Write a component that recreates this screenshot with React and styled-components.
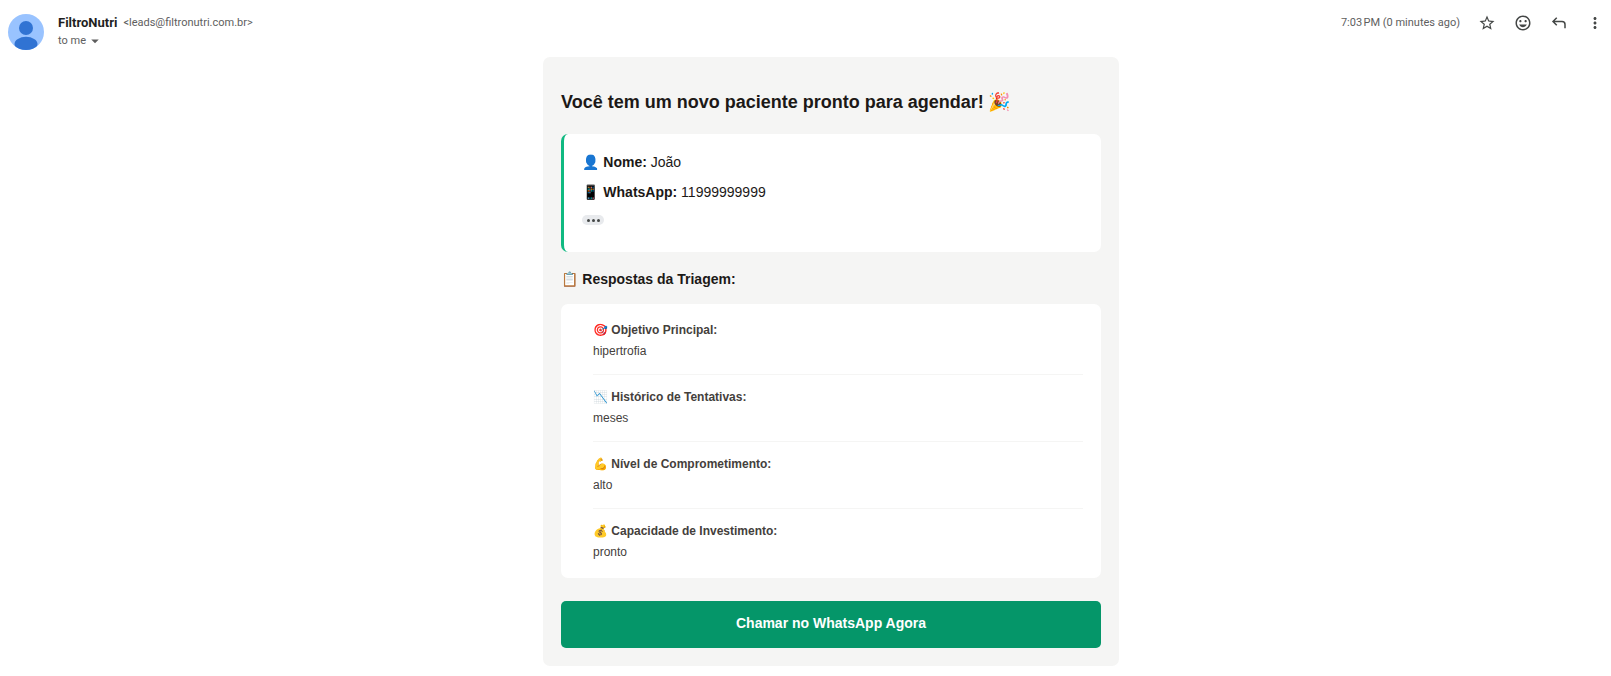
import React from 'react';
import styled, { createGlobalStyle } from 'styled-components';
import { MdStarBorder, MdMood, MdMoreVert, MdArrowDropDown } from 'react-icons/md';

const answers = [
  { icon: '🎯', question: 'Objetivo Principal:', answer: 'hipertrofia' },
  { icon: '📉', question: 'Histórico de Tentativas:', answer: 'meses' },
  { icon: '💪', question: 'Nível de Comprometimento:', answer: 'alto' },
  { icon: '💰', question: 'Capacidade de Investimento:', answer: 'pronto' },
];

const ReplyIcon = () => (
  <svg width="18" height="18" viewBox="0 0 24 24" fill="none" stroke="currentColor" strokeWidth="2">
    <path d="M9 5 4 10l5 5M4 10h12a4 4 0 0 1 4 4v5" />
  </svg>
);

const Avatar = () => (
  <AvatarSvg viewBox="0 0 36 36" aria-hidden="true">
    <clipPath id="avatar-clip">
      <circle cx="18" cy="18" r="18" />
    </clipPath>
    <g clipPath="url(#avatar-clip)">
      <rect width="36" height="36" fill="#99c3ff" />
      <circle cx="18" cy="14" r="7" fill="#3073d3" />
      <ellipse cx="18" cy="30" rx="11.5" ry="7.2" fill="#3073d3" />
    </g>
  </AvatarSvg>
);

const MessageHeader = () => (
  <Header>
    <Avatar />
    <Sender>
      <SenderLine>
        <SenderName>FiltroNutri</SenderName>
        <span>&lt;leads@filtronutri.com.br&gt;</span>
      </SenderLine>
      <Recipient type="button">
        to me <MdArrowDropDown size={18} />
      </Recipient>
    </Sender>
    <time>7:03{'\u202f'}PM (0 minutes ago)</time>
    <Actions>
      <IconButton type="button" aria-label="Star"><MdStarBorder size={18} /></IconButton>
      <IconButton type="button" aria-label="Add reaction"><MdMood size={18} /></IconButton>
      <IconButton type="button" aria-label="Reply"><ReplyIcon /></IconButton>
      <IconButton type="button" aria-label="More"><MdMoreVert size={18} /></IconButton>
    </Actions>
  </Header>
);

const App = () => (
  <>
    <GlobalStyle />
    <MessageHeader />
    <Body>
      <Email>
        <Title>Você tem um novo paciente pronto para agendar! 🎉</Title>
        <Patient>
          <Field>👤 <strong>Nome:</strong> João</Field>
          <Field>📱 <strong>WhatsApp:</strong> 11999999999</Field>
          <Trimmed type="button" aria-label="Show trimmed content">
            <Dot /><Dot /><Dot />
          </Trimmed>
        </Patient>
        <Subtitle>📋 Respostas da Triagem:</Subtitle>
        <Answers>
          {answers.map(({ icon, question, answer }) => (
            <Answer key={question}>
              <Question>{icon} {question}</Question>
              <Value>{answer}</Value>
            </Answer>
          ))}
        </Answers>
        <CallLink href="#whatsapp">Chamar no WhatsApp Agora</CallLink>
      </Email>
    </Body>
  </>
);

const GlobalStyle = createGlobalStyle`
  * {
    box-sizing: border-box;
  }

  body {
    margin: 0;
    background: #fff;
    font-family: 'Liberation Sans', Arial, 'Noto Color Emoji', sans-serif;
    color: #1c1917;
  }
`

const Header = styled.header`
  display: flex;
  align-items: flex-start;
  padding: 14px 7px 7px 8px;
  font-family: Roboto, Inter, sans-serif;
  font-size: 11px;
  line-height: 18px;
  color: #5e5e5e;
`

const AvatarSvg = styled.svg`
  width: 36px;
  height: 36px;
`

const Sender = styled.div`
  flex: 1;
  margin-left: 14px;
`

const SenderLine = styled.div`
  display: flex;
  gap: 6px;
`

const SenderName = styled.span`
  font-size: 13px;
  font-weight: 700;
  color: #1f1f1f;
`

const Recipient = styled.button`
  display: flex;
  align-items: center;
  padding: 0;
  border: 0;
  background: none;
  font: inherit;
  color: inherit;
`

const Actions = styled.div`
  display: flex;
  gap: 18px;
  margin-left: 18px;
`

const IconButton = styled.button`
  display: flex;
  padding: 0;
  border: 0;
  background: none;
  color: #444746;
`

const Body = styled.main`
  padding: 0 7px 10px 58px;
`

const Email = styled.article`
  max-width: 576px;
  margin: 0 auto;
  padding: 18px;
  border-radius: 7px;
  background: #f5f5f4;
`

const Title = styled.h1`
  margin: 15px 0 20px;
  font-size: 18px;
  line-height: 24px;
`

const Patient = styled.section`
  padding: 18px 18px 27px;
  border-left: 3px solid #10b981;
  border-radius: 7px;
  background: #fff;
  font-size: 14px;
`

const Field = styled.p`
  margin: 0 0 9px;
  line-height: 21px;
`

const Trimmed = styled.button`
  display: flex;
  align-items: center;
  justify-content: center;
  gap: 2px;
  width: 22px;
  height: 10px;
  margin-top: 12px;
  padding: 0;
  border: 0;
  border-radius: 5px;
  background: #e8eaed;
`

const Dot = styled.span`
  width: 3px;
  height: 3px;
  border-radius: 50%;
  background: #444746;
`

const Subtitle = styled.h2`
  margin: 17px 0 15px;
  font-size: 14px;
  line-height: 20px;
`

const Answers = styled.ul`
  margin: 0;
  padding: 4px 18px 3px 32px;
  border-radius: 7px;
  background: #fff;
  list-style: none;
  font-size: 12px;
  line-height: 21px;
  color: #44403c;
`

const Answer = styled.li`
  padding: 12px 0;
  border-bottom: 1px solid #f5f5f4;

  &:last-child {
    border-bottom: 0;
  }
`

const Question = styled.strong`
  display: block;
`

const Value = styled.span`
  display: block;
`

const CallLink = styled.a`
  display: block;
  margin-top: 23px;
  padding: 12px 18px 14px;
  border-radius: 5px;
  background: #059669;
  color: #fff;
  font-size: 14px;
  font-weight: bold;
  line-height: 21px;
  text-align: center;
  text-decoration: none;
`

export default App;
